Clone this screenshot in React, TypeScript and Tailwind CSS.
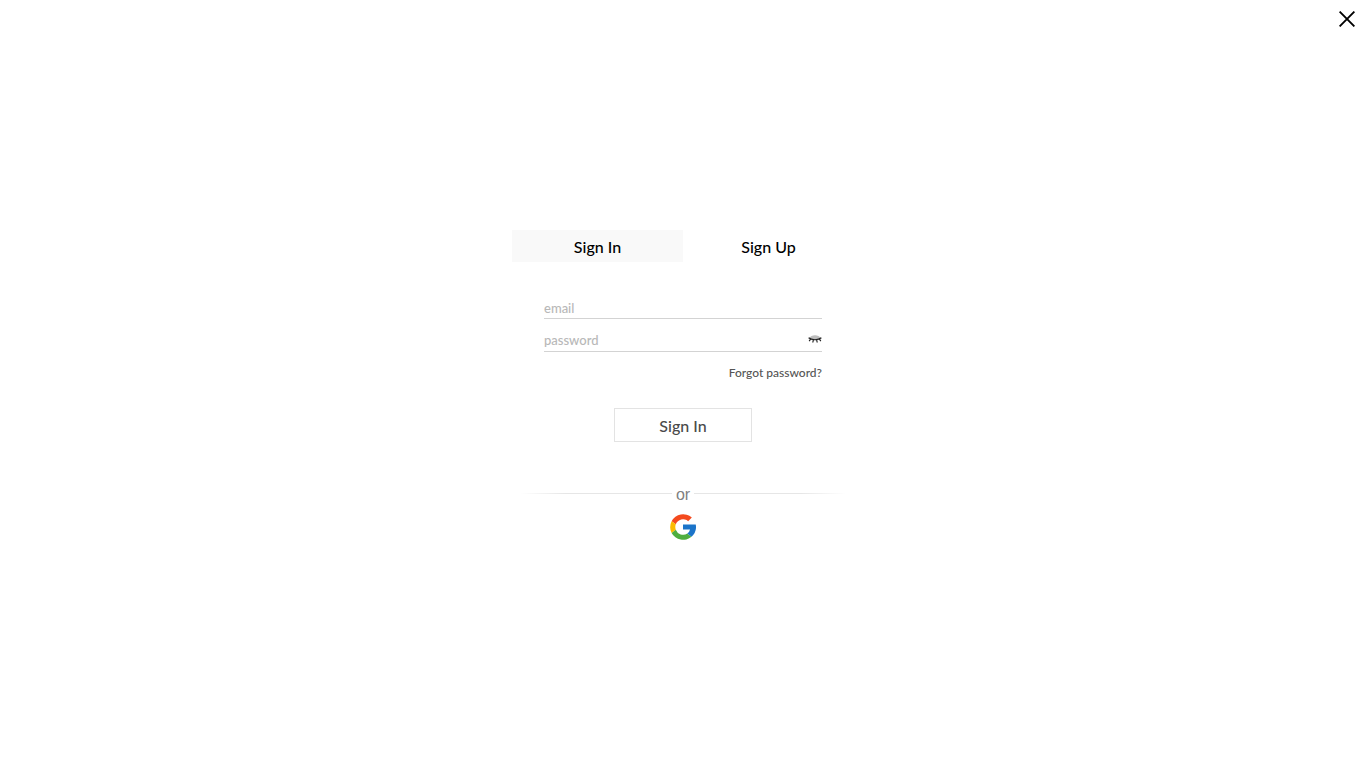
import { useState } from "react";

function CloseIcon() {
  return (
    <svg viewBox="0 0 16 16" className="size-4" fill="none" stroke="#000" strokeWidth="1.9" aria-hidden="true">
      <path d="M0.6 0.6 15.4 15.4M15.4 0.6 0.6 15.4" />
    </svg>
  );
}

function ClosedEyeIcon() {
  return (
    <svg viewBox="0 0 14 10" className="h-[10px] w-[14px]" fill="none" aria-hidden="true">
      <path d="M1.200 4.200C3 .2 11 .2 12.800 4.200 10.500 6.600 3.500 6.600 1.200 4.200Z" fill="#bdbdbd" />
      <path
        d="M.6 3.800C3.500 6.400 10.500 6.400 13.400 3.800M2.500 5.200 1.200 7.200M5.300 6 4.800 8.500M8.700 6 9.200 8.500M11.500 5.200 12.800 7.200"
        stroke="#222"
        strokeWidth="1.200"
      />
    </svg>
  );
}

function GoogleIcon() {
  return (
    <svg viewBox="0 0 48 48" className="size-[26px]" aria-hidden="true">
      <path fill="#f44a1e" d="M3 13.500A24 24 0 0 1 40.300 6.500L33.500 13.300A14.500 14.500 0 0 0 10.700 19Z" />
      <path fill="#fbbb00" d="M3 13.500 10.700 19A14.500 14.500 0 0 0 10.700 29L3 35A24 24 0 0 1 3 13.500Z" />
      <path fill="#4fae3f" d="M3 35 10.700 29A14.500 14.500 0 0 0 32 36.200L39.700 42A24 24 0 0 1 3 35Z" />
      <path fill="#1b74c9" d="M24 19.300H47.500A24 24 0 0 1 39.700 42L32 36.200A12 12 0 0 0 37 28.800H24Z" />
    </svg>
  );
}

export default function App() {
  const [tab, setTab] = useState<"in" | "up">("in");
  const [visible, setVisible] = useState(false);
  const label = tab === "in" ? "Sign In" : "Sign Up";

  return (
    <div className="relative flex min-h-screen flex-col items-center justify-center bg-white pt-0.5 font-['Lato',sans-serif]">
      <button type="button" aria-label="Close" className="absolute top-[11px] right-[11px]">
        <CloseIcon />
      </button>
      <main className="w-full max-w-[342px]">
        <div className="grid grid-cols-2 text-base font-medium text-black">
          <button
            type="button"
            onClick={() => setTab("in")}
            className={tab === "in" ? "h-8 bg-[#f9f9f9] pt-0.5" : "h-8 pt-0.5"}
          >
            Sign In
          </button>
          <button
            type="button"
            onClick={() => setTab("up")}
            className={tab === "up" ? "h-8 bg-[#f9f9f9] pt-0.5" : "h-8 pt-0.5"}
          >
            Sign Up
          </button>
        </div>
        <form className="flex flex-col px-8 pt-9" onSubmit={(e) => e.preventDefault()}>
          <input
            type="email"
            aria-label="email"
            placeholder="email"
            className="h-[21px] w-full border-b border-[#d3d3d3] text-[13px] font-medium outline-none placeholder:text-[#b8b8b8]"
          />
          <div className="mt-3 flex h-[21px] border-b border-[#d3d3d3]">
            <input
              type={visible ? "text" : "password"}
              aria-label="password"
              placeholder="password"
              className="min-w-0 flex-1 text-[13px] font-medium outline-none placeholder:text-[#b8b8b8]"
            />
            <button
              type="button"
              aria-label="Toggle password visibility"
              onClick={() => setVisible(!visible)}
              className="self-start pt-[3px]"
            >
              <ClosedEyeIcon />
            </button>
          </div>
          <a href="#forgot" className="mt-[11px] self-end text-xs leading-5 font-medium text-[#555]">
            Forgot password?
          </a>
          <button
            type="submit"
            className="mt-[25px] h-[34px] w-[138px] self-center border border-[#e3e3e3] pt-0.5 text-base font-medium text-[#4a4a4a]"
          >
            {label}
          </button>
        </form>
        <div className="mt-[43px] flex h-5 items-start px-2 text-[#808080]">
          <span className="mt-2 h-px flex-1 bg-linear-to-r from-transparent via-[#e6e6e6] via-30% to-[#e6e6e6]" />
          <span className="px-1 font-['Liberation_Sans',sans-serif] text-base leading-5">or</span>
          <span className="mt-2 h-px flex-1 bg-linear-to-l from-transparent via-[#e6e6e6] via-30% to-[#e6e6e6]" />
        </div>
        <div className="flex justify-center pt-[9px]">
          <button type="button" aria-label="Sign in with Google">
            <GoogleIcon />
          </button>
        </div>
      </main>
    </div>
  );
}
